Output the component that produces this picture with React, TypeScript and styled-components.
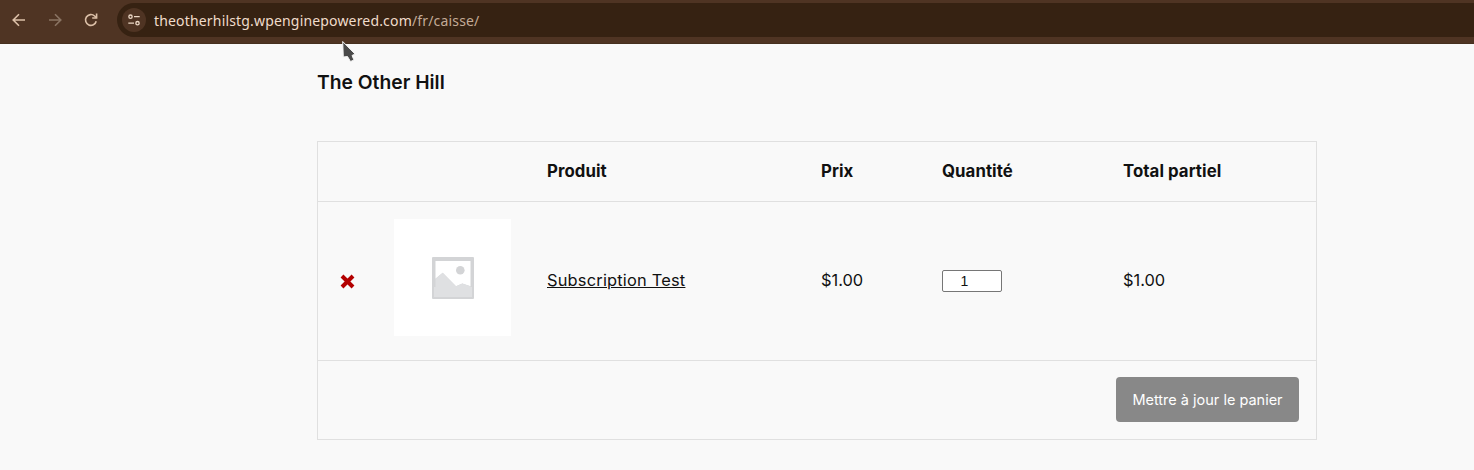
import React from "react";
import styled, { createGlobalStyle } from "styled-components";

const GlobalStyle = createGlobalStyle`
  html, body {
    margin: 0;
    padding: 0;
    background: #f9f9f9;
    overflow: hidden;
  }
  * {
    box-sizing: border-box;
  }
`;

const Page = styled.div`
  position: relative;
  width: 1474px;
  height: 470px;
  font-family: Inter, "Liberation Sans", sans-serif;
  color: #111;
`;

const Toolbar = styled.header`
  height: 44px;
  background: #4f3423;
  display: flex;
  align-items: flex-start;
  padding: 3px 0 0 7px;
  border-bottom: 1px solid #46301f;
`;

const NavButton = styled.span<{ $dim?: boolean }>`
  width: 24px;
  height: 34px;
  margin-right: 12px;
  display: flex;
  align-items: center;
  justify-content: center;
  color: ${(p) => (p.$dim ? "#8a7463" : "#dcc0a8")};
`;

const AddressBar = styled.div`
  flex: 1;
  height: 34px;
  margin-left: 2px;
  background: #362212;
  border-radius: 17px 0 0 17px;
  display: flex;
  align-items: center;
  padding-left: 5px;
  font-family: "Noto Sans", sans-serif;
  font-size: 14px;
  letter-spacing: 0.17px;
`;

const SiteInfo = styled.span`
  width: 24px;
  height: 24px;
  border-radius: 50%;
  background: #4f3423;
  display: flex;
  align-items: center;
  justify-content: center;
  color: #ecd8c6;
`;

const Host = styled.span`
  margin-left: 8px;
  color: #f0dccb;
`;

const UrlPath = styled.span`
  color: #c3ab97;
`;

const Pointer = styled.svg`
  position: absolute;
  left: 341px;
  top: 40px;
`;

const Main = styled.main`
  width: 1000px;
  margin: 0 0 0 317px;
`;

const SiteTitle = styled.h1`
  margin: 0;
  padding-top: 27px;
  font-size: 19.3px;
  line-height: 22px;
  font-weight: 600;
`;

const CartTable = styled.table`
  width: 1000px;
  margin-top: 48px;
  table-layout: fixed;
  border-collapse: separate;
  border-spacing: 0;
  border: 1px solid #e0e0e0;
  font-size: 16.4px;
`;

const HeadCell = styled.th`
  height: 60px;
  padding: 0 18px 2px;
  text-align: left;
  font-weight: 700;
  font-size: 16.8px;
  letter-spacing: 0.06px;
  border-bottom: 1px solid #e0e0e0;
`;

const BodyCell = styled.td`
  height: 159px;
  padding: 0 18px 2px;
  vertical-align: middle;
  border-bottom: 1px solid #e0e0e0;
`;

const RemoveCell = styled(BodyCell)`
  padding: 0 0 0 22px;
`;

const Thumb = styled.div`
  width: 117px;
  height: 117px;
  margin-bottom: 6px;
  background: #fff;
  display: flex;
  align-items: center;
  justify-content: center;
`;

const PlaceholderArt = styled.svg`
  margin-top: 2px;
  filter: blur(0.3px);
`;

const ProductLink = styled.a`
  color: #111;
  text-decoration: underline;
  letter-spacing: 0.2px;
`;

const QtyInput = styled.input`
  display: block;
  width: 60px;
  height: 22px;
  padding: 1px 2px;
  margin-top: 2px;
  border: 1px solid #767676;
  border-radius: 2px;
  background: #fff;
  font-family: "Liberation Sans", sans-serif;
  font-size: 14px;
  color: #111;
  text-align: center;
`;

const ActionsCell = styled.td`
  height: 78px;
  padding: 0 17px 2px 0;
  text-align: right;
`;

const UpdateButton = styled.button`
  width: 183px;
  height: 45px;
  border: 0;
  border-radius: 4px;
  background: #888;
  color: #fff;
  font-family: Inter, "Liberation Sans", sans-serif;
  font-size: 14.5px;
  vertical-align: middle;
`;

const columnWidths = [58, 153, 274, 121, 181, 211];

export default function App() {
  return (
    <Page>
      <GlobalStyle />
      <Toolbar>
        <NavButton>
          <svg width="16" height="16" viewBox="0 0 16 16" fill="none" stroke="currentColor" strokeWidth="1.6">
            <path d="M14 8H2.5M8 2.2 2.2 8 8 13.8" />
          </svg>
        </NavButton>
        <NavButton $dim>
          <svg width="16" height="16" viewBox="0 0 16 16" fill="none" stroke="currentColor" strokeWidth="1.6">
            <path d="M2 8h11.5M8 2.2 13.8 8 8 13.8" />
          </svg>
        </NavButton>
        <NavButton>
          <svg width="16" height="16" viewBox="0 0 16 16" fill="none" stroke="currentColor" strokeWidth="1.6">
            <path d="M13.2 9.2A5.4 5.4 0 1 1 11.6 4L13.4 5.6" />
            <path d="M13.6 1.6v4.4H9.2" />
          </svg>
        </NavButton>
        <AddressBar>
          <SiteInfo>
            <svg width="14" height="14" viewBox="0 0 16 16" fill="none" stroke="currentColor" strokeWidth="1.5">
              <circle cx="4" cy="4.2" r="1.9" />
              <path d="M8 4.2h6.5M1.5 11.6H8" />
              <circle cx="12" cy="11.6" r="1.9" />
            </svg>
          </SiteInfo>
          <Host>
            theotherhilstg.wpenginepowered.com<UrlPath>/fr/caisse/</UrlPath>
          </Host>
        </AddressBar>
      </Toolbar>

      <Pointer width="16" height="24" viewBox="0 0 16 24">
        <path d="M1.7 1.5 2.3 17 6.5 16.5 9.5 21.5 13 20 11 15.5 14 14Z" fill="#4a4a4a" stroke="#f4f4f4" strokeWidth="1" />
      </Pointer>

      <Main>
        <SiteTitle>The Other Hill</SiteTitle>
        <CartTable>
          <colgroup>
            {columnWidths.map((width, idx) => (
              <col key={idx} width={width} />
            ))}
          </colgroup>
          <thead>
            <tr>
              <HeadCell />
              <HeadCell />
              <HeadCell>Produit</HeadCell>
              <HeadCell>Prix</HeadCell>
              <HeadCell>Quantité</HeadCell>
              <HeadCell>Total partiel</HeadCell>
            </tr>
          </thead>
          <tbody>
            <tr>
              <RemoveCell>
                <svg width="15" height="15" viewBox="0 0 15 15" display="block" stroke="#b30000" strokeWidth="4">
                  <path d="M2 2 13 13M13 2 2 13" />
                </svg>
              </RemoveCell>
              <BodyCell>
                <Thumb>
                  <PlaceholderArt width="42" height="42" viewBox="0 0 42 42">
                    <rect width="42" height="42" rx="1" fill="#d3d4d6" />
                    <rect x="2" y="30" width="38" height="10" fill="#dfe0e2" />
                    <path d="M3.5 21.8V4H38.5V29.2L30.3 26.5 24 29.2 10.7 15.8Z" fill="#fff" />
                    <path d="M3.5 21.8 10.7 15.8 24 29.2 30.3 26.5 38.5 29.2V31H3.5Z" fill="#dfe0e2" />
                    <circle cx="28.3" cy="13.2" r="4.3" fill="#d3d4d6" />
                  </PlaceholderArt>
                </Thumb>
              </BodyCell>
              <BodyCell>
                <ProductLink href="#">Subscription Test</ProductLink>
              </BodyCell>
              <BodyCell>$1.00</BodyCell>
              <BodyCell>
                <QtyInput type="number" defaultValue={1} />
              </BodyCell>
              <BodyCell>$1.00</BodyCell>
            </tr>
            <tr>
              <ActionsCell colSpan={6}>
                <UpdateButton>Mettre à jour le panier</UpdateButton>
              </ActionsCell>
            </tr>
          </tbody>
        </CartTable>
      </Main>
    </Page>
  );
}
